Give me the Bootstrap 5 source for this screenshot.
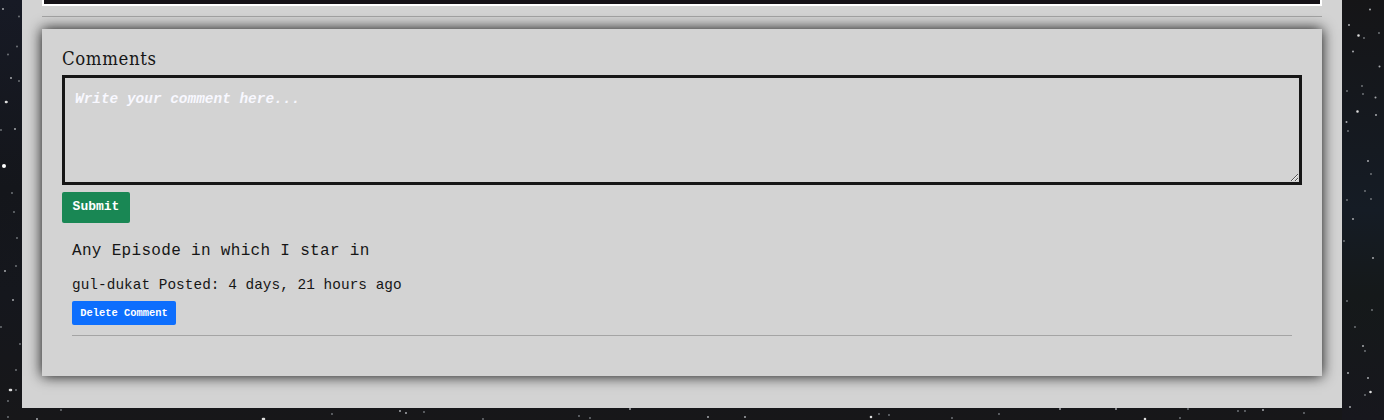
<!DOCTYPE html>
<html lang="en">
<head>
<meta charset="utf-8">
<meta name="viewport" content="width=device-width, initial-scale=1">
<title>Comments</title>
<link href="https://cdn.jsdelivr.net/npm/bootstrap@5.3.0/dist/css/bootstrap.min.css" rel="stylesheet">
<style>
body{background:#14161a;color:#161616;font-family:"Liberation Mono",monospace;height:420px;overflow:hidden}
.sky{position:fixed;inset:0;z-index:-1}
.page-panel{width:1320px;height:408px;margin-left:22px;padding:0 20px;background:#d3d3d3}
.episode-end{height:6px;background:#151217;border:2px solid #fff;border-top:0}
hr{margin:0;border-top:1px solid #161616;opacity:.25}
.page-panel>hr{margin:10px 0 12px}
.comments{height:347px;padding:20px;box-shadow:0 0 13px rgba(0,0,0,.95)}
.comments h2{font:400 18.4px/20px "DejaVu Serif Condensed","DejaVu Serif",serif;font-stretch:condensed;letter-spacing:.62px;margin:0 0 6px;height:20px}
.comment-box{height:110px;border:3px solid #161616;border-radius:0;background:#d3d3d3!important;padding:11px 10px 9px;font-size:14.4px;line-height:21px}
.comment-box::placeholder{color:#f8f8ff;font-style:italic;font-weight:700;opacity:1;letter-spacing:.02px}
.btn{border:0;border-radius:2px;font-weight:700}
.btn-send{width:68px;height:31px;margin-top:7px;padding:0 0 1px;font-size:13px;line-height:28px}
.entry{padding:16px 10px 0}
.entry p{font-size:16px;letter-spacing:.32px;line-height:24px;height:35px;margin:0}
.entry .meta{font-size:14.4px;letter-spacing:.04px;line-height:22px;height:27px}
.btn-remove{width:104px;height:24px;padding:0;font-size:10.4px;line-height:24px}
.entry hr{margin-top:10px}
</style>
</head>
<body>
<svg class="sky" width="1384" height="420" aria-hidden="true">
<defs><linearGradient id="night" x2="0" y2="1"><stop stop-color="#171a25"/><stop offset=".45" stop-color="#14161b"/><stop offset=".7" stop-color="#15171d"/><stop offset="1" stop-color="#171719"/></linearGradient>
<linearGradient id="east" x2="0" y2="1"><stop stop-color="#151517"/><stop offset=".5" stop-color="#151c25"/><stop offset=".7" stop-color="#15191a"/><stop offset="1" stop-color="#17171d"/></linearGradient></defs>
<rect width="1384" height="420" fill="url(#night)"/><rect x="1342" width="42" height="420" fill="url(#east)"/>
<g fill="none" stroke-linecap="round">
<path stroke="#777b80" stroke-width="1.8" d="M19 16.5h0M17 46.5h0M8 54.5h0M19 81h0M1 130h0M12 193h0M14 212h0M17 238h0M1 327h0M20 344h0M16 370h0M16 390h0M8 401h0M8 417h0M16 266h0M1364 38h0M1379 33h0M1362 86h0M1347 91h0M1363 94h0M1348 131h0M1371 174h0M1365 191h0M1347 200h0M1371 199h0M1344 241h0M1347 301h0M1372 310h0M1355 327h0M1365 351h0M1365 395h0M61 410h0M332 414h0M424 412h0M483 419h0M579 416h0M590 418h0M879 414h0M889 415h0M952 418h0M999 414h0M1180 418h0M1188 409h0M1238 411h0M1245 411h0M1304 413h0"/>
<path stroke="#a6a8ac" stroke-width="2" d="M3 9h0M11 78h0M15 129h0M5 271h0M13 300h0M37 419h0M1370 9.5h0M1349 25h0M1353 51.5h0M1379.5 66.5h0M1346.5 122h0M1375.5 97.5h0M1376 115h0M1368 161h0M1353 219h0M1373 258h0M1363 346h0M1348 373h0M1368 378h0M1350 407h0M400 411h0M406 413h0M630 409h0M708 417h0M745 417h0M1060 409h0M1116 409h0M1263 410h0"/>
<path stroke="#ddd" stroke-width="2.6" d="M6 102h.5M10 390h1M1357.5 111.5h0M1358.5 35.5h0M1370.5 392h0M263 419h1M871 417h0M1145 419h0"/>
<path stroke="#fff" stroke-width="4" d="M4 166h0"/>
</g>
</svg>
<main class="page-panel">
<div class="episode-end"></div>
<hr>
<section class="comments">
<h2>Comments</h2>
<form class="d-flex flex-column align-items-start">
<textarea class="form-control comment-box" placeholder="Write your comment here..." aria-label="Comment"></textarea>
<button type="button" class="btn btn-success btn-send">Submit</button>
</form>
<article class="entry">
<p>Any Episode in which I star in</p>
<div class="meta">gul-dukat Posted: 4 days, 21 hours ago</div>
<button type="button" class="btn btn-primary btn-remove d-block">Delete Comment</button>
<hr>
</article>
</section>
</main>
<script src="https://cdn.jsdelivr.net/npm/bootstrap@5.3.0/dist/js/bootstrap.bundle.min.js"></script>
</body>
</html>
